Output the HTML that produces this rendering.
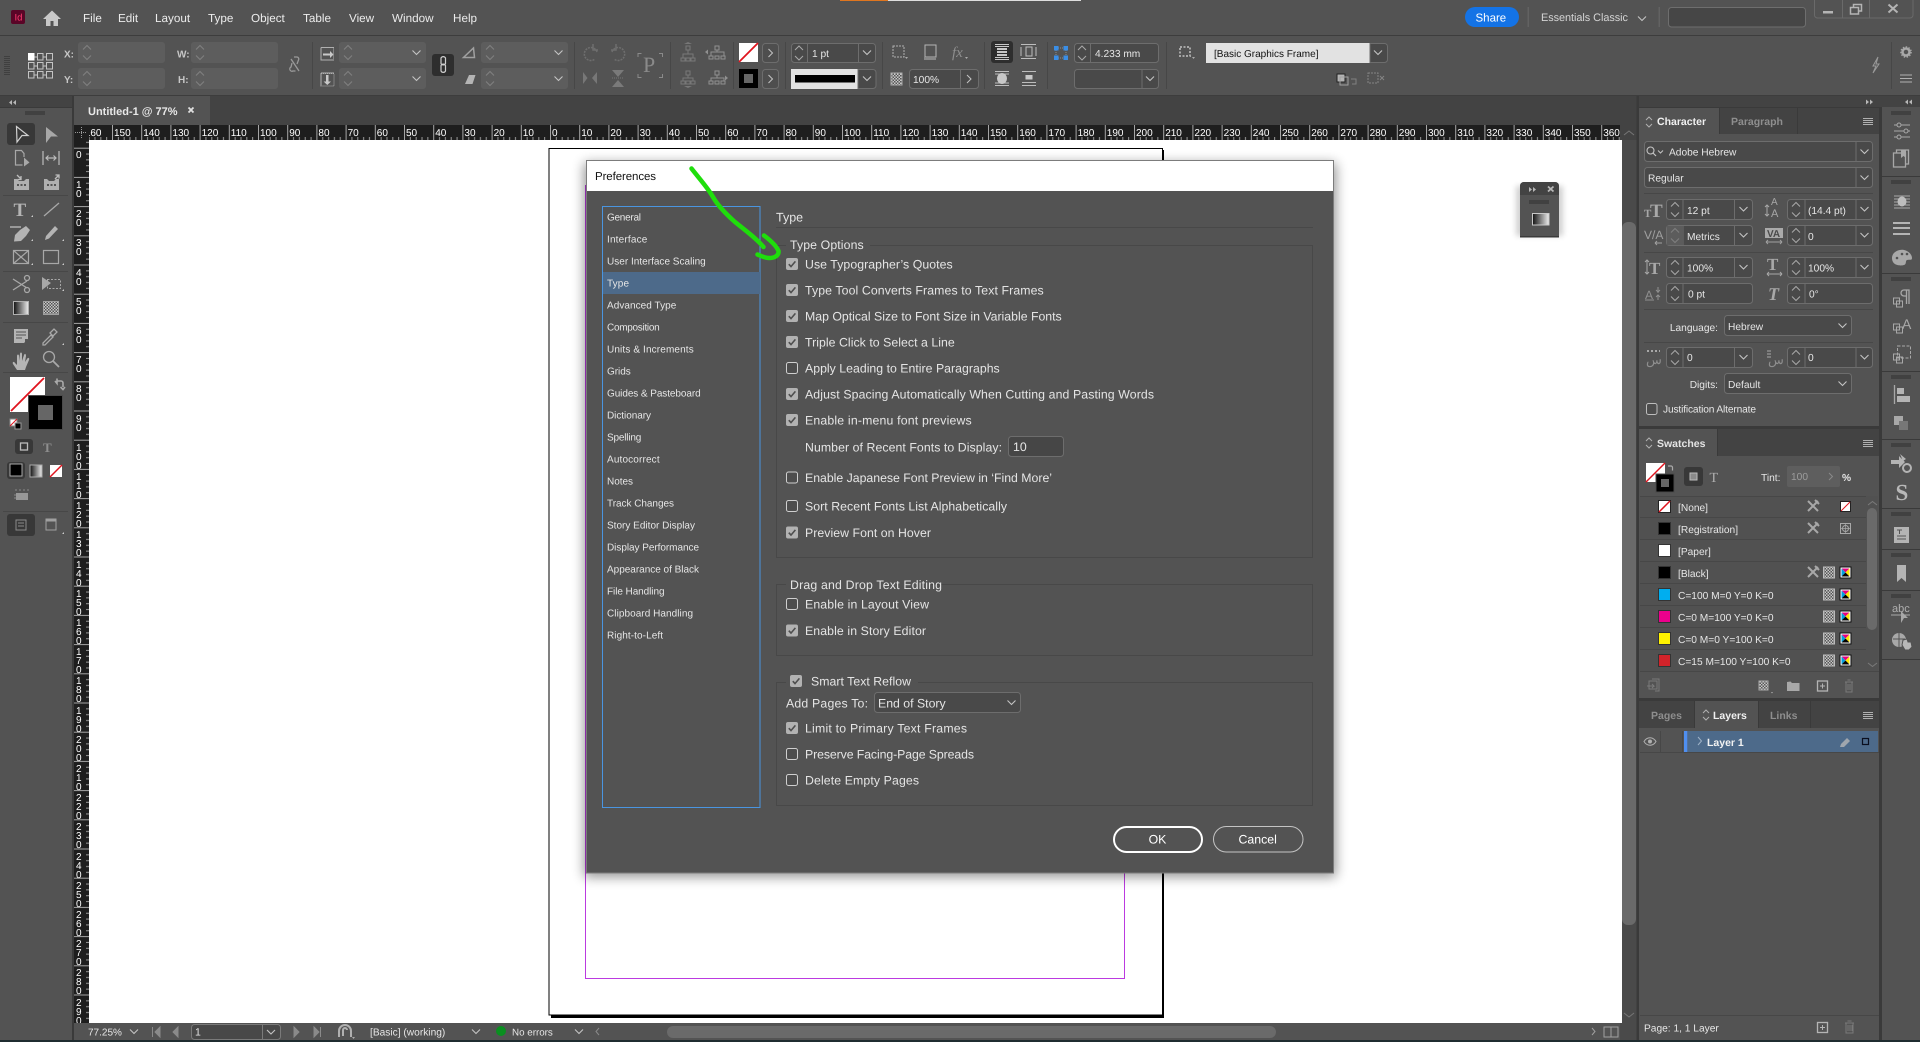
<!DOCTYPE html>
<html lang="en"><head><meta charset="utf-8"><title>InDesign Preferences</title>
<style>
html,body{margin:0;padding:0;background:#535353;width:1920px;height:1042px;overflow:hidden}
svg{position:absolute;left:0;top:0;display:block}
text{font-family:"Liberation Sans",sans-serif;font-size:10.2px;fill:#e6e6e6;text-rendering:geometricPrecision}
.menu text{font-size:11.7px;fill:#ececec}
.dl text{font-size:12.3px;fill:#e4e4e4}
.side text{font-size:10px;fill:#e6e6e6}
.rul text{font-size:10px;fill:#fff}
.b{font-weight:bold}
.i{fill:none;stroke:#a8a8a8;stroke-width:1.2}
.f{fill:#a8a8a8;stroke:none}
.sep{fill:#474747}
.serif{font-family:"Liberation Serif",serif;font-weight:bold;fill:#a8a8a8}
</style></head><body>
<svg xmlns="http://www.w3.org/2000/svg" width="1920" height="1042" viewBox="0 0 1920 1042">
<defs>
<g id="cd"><path d="M-4 -2L0 2L4 -2" fill="none" stroke="#c4c4c4" stroke-width="1.1"/></g>
<g id="sp"><path d="M-4 -3L0 -7L4 -3M-4 3L0 7L4 3" fill="none" stroke="#a8a8a8" stroke-width="1"/></g>
<g id="sd"><path d="M-4 -3L0 -7L4 -3M-4 3L0 7L4 3" fill="none" stroke="#808080" stroke-width="1"/></g>
<g id="ck"><rect x="0" y="-6" width="12" height="12" rx="2" fill="#b2b2b2"/><path d="M2.8 0.2L5 2.6L9.4 -2.6" fill="none" stroke="#4e4e4e" stroke-width="1.6"/></g>
<g id="un"><rect x=".5" y="-5.5" width="11" height="11" rx="2" fill="#4d4d4d" stroke="#cfcfcf"/></g>
<g id="d0"><rect x="0" y="0" width="87" height="21" rx="3" fill="#5d5d5d"/><use href="#sd" x="9" y="10.5"/></g>
<g id="fl"><rect x="1666.5" y=".5" width="86" height="20" rx="3" fill="#494949" stroke="#6d6d6d"/><path d="M1683 1v19M1734.5 1v19" stroke="#6d6d6d"/><use href="#sp" x="1675" y="10.5"/><use href="#cd" x="1743.5" y="10"/></g>
<g id="fr"><rect x="1787.5" y=".5" width="85" height="20" rx="3" fill="#494949" stroke="#6d6d6d"/><path d="M1805 1v19M1856 1v19" stroke="#6d6d6d"/><use href="#sp" x="1796" y="10.5"/><use href="#cd" x="1864.5" y="10"/></g>
<g id="cmyk"><rect x="-5.5" y="-5.5" width="11" height="11" fill="#fff" stroke="#111"/><path d="M-4 -4H4L0 0Z" fill="#e6007e"/><path d="M-4 -4V4L0 0Z" fill="#00a0e0"/><path d="M4 -4V4L0 0Z" fill="#ffe800"/><path d="M-4 4H4L0 0Z" fill="#000"/></g>
<pattern id="chk" patternUnits="userSpaceOnUse" width="3" height="3"><rect width="3" height="3" fill="#c8c8c8"/><rect width="1.5" height="1.5" fill="#555"/><rect x="1.5" y="1.5" width="1.5" height="1.5" fill="#555"/></pattern>
<g id="proc"><rect x="-5.5" y="-5.5" width="11" height="11" fill="url(#chk)" stroke="#bbb"/></g>
<g id="pen"><path d="M-5 -5L5 5M5 -5L-5 5" stroke="#a8a8a8" stroke-width="2"/><path d="M2 -6L6 -2" stroke="#a8a8a8" stroke-width="2"/></g>
<g id="grip"><path d="M0 0v4M2 0v4M4 0v4M6 0v4M8 0v4M10 0v4M12 0v4M14 0v4M16 0v4M18 0v4" stroke="#2f2f2f" stroke-width="1"/></g>
<pattern id="hr" patternUnits="userSpaceOnUse" x="550" y="125" width="29.2" height="15"><rect width="1" height="15" fill="#a6a6a6"/><rect x="5.84" y="12" width="1" height="3" fill="#9a9a9a"/><rect x="11.68" y="12" width="1" height="3" fill="#9a9a9a"/><rect x="17.52" y="12" width="1" height="3" fill="#9a9a9a"/><rect x="23.36" y="12" width="1" height="3" fill="#9a9a9a"/></pattern>
<pattern id="vr" patternUnits="userSpaceOnUse" x="74" y="147.7" width="15" height="29.2"><rect width="15" height="1" fill="#a6a6a6"/><rect x="12" y="5.84" width="3" height="1" fill="#9a9a9a"/><rect x="12" y="11.68" width="3" height="1" fill="#9a9a9a"/><rect x="12" y="17.52" width="3" height="1" fill="#9a9a9a"/><rect x="12" y="23.36" width="3" height="1" fill="#9a9a9a"/></pattern>
<linearGradient id="gr" x1="0" x2="1" y1="0" y2="0"><stop offset="0" stop-color="#111"/><stop offset="1" stop-color="#eee"/></linearGradient>
<filter id="bl" x="-10%" y="-10%" width="120%" height="120%"><feGaussianBlur stdDeviation="6"/></filter>
<filter id="bl2" x="-40%" y="-40%" width="180%" height="180%"><feGaussianBlur stdDeviation="3"/></filter>
<clipPath id="hc"><rect x="89" y="125" width="1531" height="15"/></clipPath>
</defs>

<!-- base -->
<rect width="1920" height="1042" fill="#535353"/>
<rect y="35" width="1920" height="1" fill="#3d3d3d"/>
<rect y="95" width="1920" height="1" fill="#3d3d3d"/>
<rect x="0" y="96" width="1920" height="11" fill="#434343"/>
<rect x="74" y="96" width="1564" height="29" fill="#434343"/>
<rect x="0" y="107" width="72" height="1" fill="#3a3a3a"/>
<rect x="72" y="96" width="2" height="944" fill="#3a3a3a"/>
<rect x="840" y="0" width="48" height="1" fill="#e0761f"/><rect x="888" y="0" width="193" height="1" fill="#dedede"/>

<!-- canvas -->
<rect x="89" y="140" width="1533" height="883" fill="#fff"/>
<rect x="551" y="150" width="613" height="868" fill="#000"/>
<rect x="549" y="148.5" width="613.500" height="866.500" fill="#fff" stroke="#000"/>
<rect x="585.5" y="185.5" width="539" height="793" fill="none" stroke="#bb3ae0" stroke-width="1"/>

<!-- rulers -->
<rect x="74" y="125" width="1546" height="15" fill="#1e1e1e"/>
<rect x="74" y="140" width="15" height="883" fill="#1e1e1e"/>
<rect x="89" y="125" width="1531" height="15" fill="url(#hr)"/>
<rect x="74" y="140" width="15" height="883" fill="url(#vr)"/>
<path d="M75 132.5h12M81.5 127v11" stroke="#999" stroke-dasharray="1 1"/>
<g class="rul" clip-path="url(#hc)">
<text x="84.8" y="136">160</text><text x="114" y="136">150</text><text x="143.2" y="136">140</text><text x="172.4" y="136">130</text><text x="201.6" y="136">120</text><text x="230.8" y="136">110</text><text x="260" y="136">100</text><text x="289.2" y="136">90</text><text x="318.4" y="136">80</text><text x="347.6" y="136">70</text><text x="376.8" y="136">60</text><text x="406" y="136">50</text><text x="435.2" y="136">40</text><text x="464.4" y="136">30</text><text x="493.6" y="136">20</text><text x="522.8" y="136">10</text><text x="552" y="136">0</text><text x="581.2" y="136">10</text><text x="610.4" y="136">20</text><text x="639.6" y="136">30</text><text x="668.8" y="136">40</text><text x="698" y="136">50</text><text x="727.2" y="136">60</text><text x="756.4" y="136">70</text><text x="785.6" y="136">80</text><text x="814.8" y="136">90</text><text x="844" y="136">100</text><text x="873.2" y="136">110</text><text x="902.4" y="136">120</text><text x="931.6" y="136">130</text><text x="960.8" y="136">140</text><text x="990" y="136">150</text><text x="1019.2" y="136">160</text><text x="1048.4" y="136">170</text><text x="1077.6" y="136">180</text><text x="1106.8" y="136">190</text><text x="1136" y="136">200</text><text x="1165.2" y="136">210</text><text x="1194.4" y="136">220</text><text x="1223.6" y="136">230</text><text x="1252.8" y="136">240</text><text x="1282" y="136">250</text><text x="1311.2" y="136">260</text><text x="1340.4" y="136">270</text><text x="1369.6" y="136">280</text><text x="1398.8" y="136">290</text><text x="1428" y="136">300</text><text x="1457.2" y="136">310</text><text x="1486.4" y="136">320</text><text x="1515.6" y="136">330</text><text x="1544.8" y="136">340</text><text x="1574" y="136">350</text><text x="1603.2" y="136">360</text>
</g>
<g class="rul">
<text x="76" y="158">0</text>
<text x="76 76" y="188 197">10</text><text x="76 76" y="217 226">20</text><text x="76 76" y="246 255">30</text><text x="76 76" y="276 285">40</text><text x="76 76" y="305 314">50</text><text x="76 76" y="334 343">60</text><text x="76 76" y="363 372">70</text><text x="76 76" y="392 401">80</text><text x="76 76" y="422 431">90</text>
<text x="76 76 76" y="451 460 469">100</text><text x="76 76 76" y="480 489 498">110</text><text x="76 76 76" y="509 518 527">120</text><text x="76 76 76" y="538 547 556">130</text><text x="76 76 76" y="568 577 586">140</text><text x="76 76 76" y="597 606 615">150</text><text x="76 76 76" y="626 635 644">160</text><text x="76 76 76" y="655 664 673">170</text><text x="76 76 76" y="684 693 702">180</text><text x="76 76 76" y="714 723 732">190</text><text x="76 76 76" y="743 752 761">200</text><text x="76 76 76" y="772 781 790">210</text><text x="76 76 76" y="801 810 819">220</text><text x="76 76 76" y="830 839 848">230</text><text x="76 76 76" y="860 869 878">240</text><text x="76 76 76" y="889 898 907">250</text><text x="76 76 76" y="918 927 936">260</text><text x="76 76 76" y="947 956 965">270</text><text x="76 76 76" y="976 985 994">280</text><text x="76 76 76" y="1006 1015 1024">290</text>
</g>
<rect x="74" y="1023" width="1564" height="17" fill="#535353"/>

<!-- tab -->
<rect x="74" y="96" width="136" height="29" fill="#535353"/>
<text x="88" y="115" class="b" style="font-size:11px;fill:#e8e8e8">Untitled-1 @ 77%</text>
<path d="M188.5 107.5l5 5M193.5 107.5l-5 5" stroke="#e0e0e0" stroke-width="1.8"/>
<path d="M12 100l-3 2.5 3 2.5zM16 100l-3 2.5 3 2.5z" fill="#b8b8b8"/>

<!-- menu -->
<rect x="11" y="10" width="14" height="14" rx="2" fill="#5a0527"/>
<text x="14.5" y="20.5" style="font-size:9.5px;fill:#ff3a70">Id</text>
<path d="M52 10.5L43 19h3v7h4.500v-5h3v5H58v-7h3z" fill="#c8c8c8"/>
<g class="menu"><text x="83" y="22">File</text><text x="118" y="22">Edit</text><text x="155" y="22">Layout</text><text x="208" y="22">Type</text><text x="251" y="22">Object</text><text x="303" y="22">Table</text><text x="349" y="22">View</text><text x="392" y="22">Window</text><text x="453" y="22">Help</text></g>
<rect x="1465" y="7" width="54" height="20" rx="10" fill="#1473e6"/>
<text x="1475.5" y="21.5" style="font-size:11.5px;fill:#fff">Share</text>
<rect x="1527.5" y="7" width="1.5" height="20" fill="#626262"/>
<text x="1541" y="21" textLength="87" style="font-size:10.9px;fill:#d4d4d4">Essentials Classic</text>
<use href="#cd" x="1642" y="18.5"/>
<rect x="1658.5" y="7" width="1.5" height="20" fill="#626262"/>
<rect x="1668.5" y="7.5" width="137" height="19.5" rx="3" fill="#464646" stroke="#6e6e6e"/>
<path d="M1814.5 0v15a3 3 0 0 0 3 3h92.500a3 3 0 0 0 3-3V0M1842.5 0v18M1869.5 0v18" fill="none" stroke="#6a6a6a"/>
<rect x="1823" y="11" width="10" height="2.5" fill="#b4b4b4"/>
<path d="M1850.5 7.5h8v6.500h-8zM1853.5 7.5v-3h8v6.500h-3" fill="none" stroke="#b4b4b4" stroke-width="1.5"/>
<path d="M1888.5 4.5l9 8M1897.5 4.5l-9 8" stroke="#b4b4b4" stroke-width="2"/>

<!-- control bar -->
<g fill="#3f3f3f"><path d="M4 56h6v1H4zM4 58h6v1H4zM4 60h6v1H4zM4 62h6v1H4zM4 64h6v1H4zM4 66h6v1H4zM4 68h6v1H4zM4 70h6v1H4zM4 72h6v1H4zM4 74h6v1H4z"/></g>
<g fill="none" stroke="#c4c4c4"><rect x="37.5" y="53.5" width="5.5" height="6.5"/><rect x="46.5" y="53.5" width="6" height="6.5"/><rect x="28.5" y="62.5" width="5.5" height="6.5"/><rect x="37.5" y="62.5" width="5.5" height="6.5"/><rect x="46.5" y="62.5" width="6" height="6.5"/><rect x="28.5" y="71.5" width="5.5" height="6.5"/><rect x="37.5" y="71.5" width="5.5" height="6.5"/><rect x="46.5" y="71.5" width="6" height="6.5"/><path d="M34 57h3.500M43 57h3.500M34 66h3.500M43 66h3.500M34 75h3.500M43 75h3.500"/></g>
<rect x="28" y="53" width="6.5" height="7.5" fill="#fff"/>
<text x="64" y="57.5" class="b" style="font-size:10px;fill:#c8c8c8">X:</text><text x="64" y="83" class="b" style="font-size:10px;fill:#c8c8c8">Y:</text>
<text x="177" y="57.5" class="b" style="font-size:10px;fill:#c8c8c8">W:</text><text x="178" y="83" class="b" style="font-size:10px;fill:#c8c8c8">H:</text>
<use href="#d0" x="78" y="42"/><use href="#d0" x="78" y="68"/><use href="#d0" x="191" y="42"/><use href="#d0" x="191" y="68"/>
<use href="#d0" x="339" y="42"/><use href="#d0" x="339" y="68"/><use href="#d0" x="481" y="42"/><use href="#d0" x="481" y="68"/>
<use href="#cd" x="416.5" y="52.5"/><use href="#cd" x="416.5" y="78.5"/><use href="#cd" x="558.5" y="52.5"/><use href="#cd" x="558.5" y="78.5"/>
<path d="M291 59l8 12M294 57h2.500a2 2 0 0 1 2 3l-1.500 4M292 63l-1 4a2 2 0 0 0 2 4h2.500" fill="none" stroke="#9a9a9a" stroke-width="1.3"/>
<rect x="312" y="42" width="1" height="47" class="sep"/>
<path d="M321 47.5h13M321 47.5v12.500h13" fill="none" stroke="#b0b0b0"/><path d="M323 53.5h7v-2.500l3.500 3.500-3.500 3.500v-2.500h-7z" fill="#c8c8c8"/><path d="M333.5 47.5v12.500" stroke="#b0b0b0" stroke-dasharray="1 1"/>
<path d="M321 73.5v12.500h13v-12.500z" fill="none" stroke="#b0b0b0" stroke-dasharray="1 1"/><path d="M321 73v13M321 73h13" stroke="#b0b0b0"/><path d="M326 75h2.500v6.500h2.500l-3.700 3.500-3.700-3.500h2.400z" fill="#c8c8c8"/>
<rect x="432" y="54" width="22" height="22" rx="3" fill="#2e2e2e"/>
<path d="M441 58.5a2.500 2.500 0 0 1 4.500 0v5.500a2.500 2.500 0 0 1-4.500 0zM441 66a2.500 2.500 0 0 1 4.500 0v5.500a2.500 2.500 0 0 1-4.500 0z" fill="none" stroke="#cfcfcf" stroke-width="1.2" transform="translate(0,-.5)"/>
<path d="M463.5 57.5h11l-1-9.500z" fill="none" stroke="#a0a0a0" stroke-width="1.5"/>
<path d="M465 84l4-9h6.500l-3 9z" fill="#b4b4b4"/>
<rect x="574" y="42" width="1" height="47" class="sep"/>
<g fill="none" stroke="#6e6e6e" stroke-width="1.5"><path d="M597 52a6.500 6.500 0 1 0-2 7" stroke-dasharray="2 1"/><path d="M612 52a6.500 6.500 0 1 1 2 7" stroke-dasharray="2 1"/></g>
<path d="M593 44v6h5M616 44v6h-5" stroke="#6e6e6e" fill="none" stroke-width="1.5"/>
<path d="M583 72v12l4.500-6zM597 72v12l-5-6z" fill="#777"/><path d="M612 70h12l-6 7zM612 87h12l-6-7z" fill="#7a7a7a"/><path d="M612 78h12" stroke="#777" stroke-dasharray="1 1"/>
<path d="M638 57v-3.500h3.500M659 53.5h3.500v3.500M638 74v3.500h3.500M659 77.5h3.500V74" fill="none" stroke="#8a8a8a" stroke-width="1"/>
<text x="643" y="72" class="serif" style="font-size:22px;font-weight:normal;fill:#8a8a8a">P</text>
<rect x="670" y="42" width="1" height="47" class="sep"/>
<g fill="none" stroke="#787878"><rect x="686" y="46" width="4" height="4"/><path d="M688 50v4M683 58v-4h10v4"/><rect x="681" y="58" width="4" height="3"/><rect x="686" y="58" width="4" height="3"/><rect x="691" y="58" width="4" height="3"/>
<rect x="686" y="71" width="4" height="4"/><path d="M688 75v3M683 81v-3h10v3"/><rect x="681" y="81" width="4" height="3"/><rect x="686" y="81" width="4" height="3"/><rect x="691" y="81" width="4" height="3"/></g>
<path d="M684 44l4-2 4 2zM684 86l4 2 4-2z" fill="#787878"/>
<g fill="none" stroke="#909090"><rect x="715" y="46" width="4" height="4"/><path d="M717 50v2M711 56v-4h13v4"/><rect x="709" y="56" width="4" height="3"/><rect x="715" y="56" width="4" height="3"/><rect x="721" y="56" width="4" height="3"/><rect x="715" y="71" width="4" height="4"/><path d="M717 75v3M711 81v-3h13v3"/><rect x="709" y="81" width="4" height="3"/><rect x="715" y="81" width="4" height="3"/><rect x="721" y="81" width="4" height="3"/></g>
<path d="M705 52l3-2.500v5zM728 78l-3-2.500v5z" fill="#909090"/>
<rect x="733" y="42" width="1" height="47" class="sep"/>
<rect x="739" y="43" width="19" height="19" fill="#fff"/><path d="M739 62L758 43" stroke="#e0141e" stroke-width="1.8"/>
<rect x="762.5" y="43.5" width="16" height="19" rx="3" fill="#4e4e4e" stroke="#6d6d6d"/><path d="M768.5 49l4 4-4 4" fill="none" stroke="#c4c4c4"/>
<rect x="739" y="69" width="19" height="19" fill="#000"/><rect x="744" y="74" width="9" height="9" fill="#666"/>
<rect x="762.5" y="69.5" width="16" height="19" rx="3" fill="#4e4e4e" stroke="#6d6d6d"/><path d="M768.5 75l4 4-4 4" fill="none" stroke="#c4c4c4"/>
<rect x="785" y="42" width="1" height="47" class="sep"/>
<rect x="791.5" y="43.5" width="84" height="19" rx="3" fill="#494949" stroke="#6d6d6d"/><path d="M807.5 44v18M858.5 44v18" stroke="#6d6d6d"/><use href="#sp" x="799" y="53"/><use href="#cd" x="867" y="52.5"/>
<text x="812" y="57">1 pt</text>
<rect x="791" y="69" width="67" height="20" fill="#e2e2e2"/><rect x="795" y="75" width="60" height="7.5" fill="#000"/>
<path d="M858 69.5h15a3 3 0 0 1 3 3v13a3 3 0 0 1-3 3h-15z" fill="#494949" stroke="#6d6d6d"/><use href="#cd" x="867" y="78.5"/>
<rect x="882" y="42" width="1" height="47" class="sep"/>
<path d="M893 46h11v11h-11z" fill="none" stroke="#b0b0b0" stroke-dasharray="2 1"/><rect x="925" y="45" width="11" height="12" fill="none" stroke="#b4b4b4"/><rect x="924" y="57" width="12" height="3" fill="#888"/>
<text x="952" y="57" style="font-family:'Liberation Serif',serif;font-style:italic;font-size:15px;fill:#8e8e8e">fx</text><path d="M965 57l1.5 2 1.5-2zM905 57l1.5 2 1.5-2z" fill="#aaa"/>
<rect x="891" y="73" width="11" height="12" fill="url(#chk)" stroke="#aaa"/>
<rect x="909.5" y="69.5" width="69" height="19" rx="3" fill="#494949" stroke="#6d6d6d"/><path d="M960.5 70v18" stroke="#6d6d6d"/><path d="M967 75l4 4-4 4" fill="none" stroke="#c4c4c4"/>
<text x="913" y="83">100%</text>
<rect x="984" y="42" width="1" height="47" class="sep"/>
<rect x="991" y="41" width="22" height="22" rx="3" fill="#2e2e2e"/>
<path d="M995 46.5h14M995 57.5h14M995 59.5h14M995 44.5h14" stroke="#c8c8c8"/><path d="M997 48h10v2h-10zM997 51h10v2h-10zM997 54h10v2h-10z" fill="#c8c8c8"/>
<g stroke="#bdbdbd" fill="none"><path d="M1021 44.5h15M1021 58.5h15M1021 47v9M1036 47v9"/><rect x="1026" y="47" width="6" height="9"/><path d="M995 71.5h14M995 74h14M995 83h14M995 85.5h14M1022 71.5h14M1022 85.5h14M1022 82.5h14"/></g><ellipse cx="1002" cy="78.5" rx="5" ry="5.5" fill="#c8c8c8"/><rect x="1025.5" y="75" width="7" height="4.5" fill="#c8c8c8"/>
<rect x="1047" y="42" width="1" height="47" class="sep"/>
<path d="M1058 48h6M1058 58h6M1056 50v6M1066 50v6" stroke="#8c8c8c" stroke-dasharray="1 1"/>
<g fill="#3a8ee6"><rect x="1054" y="46" width="4.5" height="4.5"/><rect x="1063.5" y="46" width="4.5" height="4.5"/><rect x="1054" y="55.5" width="4.5" height="4.5"/><rect x="1063.5" y="55.5" width="4.5" height="4.5"/></g>
<rect x="1074.5" y="43.5" width="84" height="19" rx="3" fill="#494949" stroke="#6d6d6d"/><path d="M1090.5 44v18" stroke="#6d6d6d"/><use href="#sp" x="1082" y="53"/>
<text x="1095" y="57">4.233 mm</text>
<rect x="1074.5" y="69.5" width="84" height="19" rx="3" fill="#494949" stroke="#6d6d6d"/><path d="M1142 70v18" stroke="#6d6d6d"/><use href="#cd" x="1150" y="78.5"/>
<rect x="1166" y="42" width="1" height="47" class="sep"/>
<rect x="1180" y="47" width="10" height="9" fill="none" stroke="#a6a6a6" stroke-width="2" stroke-dasharray="2 1.500"/><path d="M1192 57l1.5 2 1.500-2z" fill="#aaa"/>
<rect x="1206" y="43" width="164" height="20" fill="#e2e2e2"/>
<text x="1214" y="57" style="font-size:10px;fill:#111">[Basic Graphics Frame]</text>
<path d="M1370 43.5h14.500a3 3 0 0 1 3 3v13a3 3 0 0 1-3 3h-14.500z" fill="#494949" stroke="#6d6d6d"/><use href="#cd" x="1378" y="52.5"/>
<rect x="1337" y="74" width="8" height="8" fill="#b4b4b4" stroke="#222"/><rect x="1340" y="77" width="8" height="8" fill="none" stroke="#a0a0a0"/><path d="M1351 79h5v5h-4" fill="none" stroke="#808080"/>
<rect x="1368" y="73" width="10" height="10" fill="none" stroke="#848484" stroke-dasharray="2 1"/><path d="M1380 76l4 4M1384 76l-4 4" stroke="#848484"/>
<path d="M1878 57l-5 9h3l-3 7 6-9h-3l2-7z" fill="none" stroke="#9a9a9a" stroke-width="1"/>
<rect x="1891" y="42" width="1" height="47" class="sep"/>
<circle cx="1906" cy="52" r="3.5" fill="none" stroke="#a8a8a8" stroke-width="2.5"/><circle cx="1906" cy="52" r="5.2" fill="none" stroke="#a8a8a8" stroke-width="1.2" stroke-dasharray="1.500 1.500"/>
<path d="M1900 75h12M1900 78.5h12M1900 82h12" stroke="#b0b0b0"/>
<path d="M1866 99.5l3 2.500-3 2.500zM1870 99.5l3 2.500-3 2.500zM1908 99.5l-3 2.500 3 2.500zM1912 99.5l-3 2.500 3 2.500z" fill="#b8b8b8"/>

<!-- tools -->
<use href="#grip" x="26" y="111"/>
<rect x="7" y="123" width="28" height="22" rx="3" fill="#383838"/>
<path d="M16.5 126.5L28 135.5L22 135.5L17 142Z" fill="none" stroke="#d0d0d0" stroke-width="1.2"/>
<path d="M46 127L58 136.5L51 136.5L46 143Z" fill="#a8a8a8"/>
<path d="M24 157v-3.500L21.500 150.5H15.5V165h7" fill="none" stroke="#a8a8a8" stroke-width="1.2"/><path d="M24 157.5l5.500 5-5.500 4z" fill="#a8a8a8"/>
<path d="M43 151v14M59 151v14" stroke="#a8a8a8" stroke-width="1.5"/><path d="M46 158h10M48.5 155.5L46 158l2.500 2.500M53.5 155.5L56 158l-2.500 2.500" fill="none" stroke="#bcbcbc" stroke-width="1.2"/>
<path d="M14 179h3l2 2h5l2-2h3v11H14z" fill="#b0b0b0"/><path d="M17 184h2v2h-2zM20.5 184h2v2h-2zM24 184h2v2h-2z" fill="#555"/><path d="M17 175l4 4M21 176v3.500h-3.500" fill="none" stroke="#bdbdbd" stroke-width="1.3"/>
<path d="M44 179h3l2 2h5l2-2h3v11H44z" fill="#b0b0b0"/><path d="M47 184h2v2h-2zM50.5 184h2v2h-2zM54 184h2v2h-2z" fill="#555"/><path d="M55 179l4-4M55.5 175h3.500v3.500" fill="none" stroke="#bdbdbd" stroke-width="1.3"/>
<rect x="3" y="195" width="65" height="1" fill="#474747"/>
<text x="13.5" y="216" class="serif" style="font-size:19px;fill:#b4b4b4">T</text><path d="M31 217l2 0 0-2z" fill="#ccc"/>
<path d="M44 216L59 203" stroke="#a8a8a8" stroke-width="1.3"/>
<path d="M10 227h11" stroke="#b0b0b0" stroke-width="1.5"/><path d="M15 235l5-5 6-4 4 4-4 6-5 5-7 0.500z" fill="#b4b4b4"/><path d="M31 241l2 0 0-2z" fill="#ccc"/>
<path d="M45 240l1-4 9-10 3 3-9 9.500z" fill="#b4b4b4"/><path d="M62 241l2 0 0-2z" fill="#ccc"/>
<rect x="13.5" y="250.5" width="15" height="13" fill="none" stroke="#a8a8a8" stroke-width="1.2"/><path d="M13.5 250.5l15 13M28.5 250.5l-15 13" stroke="#a8a8a8" stroke-width="1.2"/><path d="M31 265l2 0 0-2z" fill="#ccc"/>
<rect x="43.5" y="250.5" width="15" height="13" fill="none" stroke="#a8a8a8" stroke-width="1.2"/><path d="M62 265l2 0 0-2z" fill="#ccc"/>
<rect x="3" y="271" width="65" height="1" fill="#474747"/>
<g fill="none" stroke="#a8a8a8" stroke-width="1.3"><path d="M13 279l14 9M13 290l14-9"/><circle cx="27" cy="278" r="2.5"/><circle cx="27" cy="290" r="2.5"/></g>
<path d="M42 277l9 6-9 7z" fill="#a8a8a8"/><rect x="47.5" y="279.5" width="13" height="9" fill="none" stroke="#a8a8a8" stroke-dasharray="2 1.500"/><path d="M62 291l2 0 0-2z" fill="#ccc"/>
<rect x="13.5" y="301.5" width="15" height="13" fill="url(#gr)" stroke="#b0b0b0"/>
<rect x="43.5" y="301.5" width="15" height="13" fill="url(#chk)" stroke="#a0a0a0"/>
<rect x="3" y="322" width="65" height="1" fill="#474747"/>
<path d="M14 329h14v10l-4 4H14z" fill="#b4b4b4"/><path d="M16 332h10M16 335h10M16 338h6" stroke="#555"/><path d="M25 343l3-4h-3z" fill="#555"/>
<path d="M45 345l-2 0 0-2 8-8 2 2zM50 333l4-4 3 3-4 4z" fill="none" stroke="#a8a8a8" stroke-width="1.3"/><path d="M62 345l2 0 0-2z" fill="#ccc"/>
<path d="M17 370l-4-6c-1-2 1-3 2-1l2 2v-9c0-2 2-2 2 0v5l1-7c0-2 2-2 2 0v7l2-6c1-2 2-1 2 1l-1 6 2-3c1-2 3-1 2 1l-3 7-1 3z" fill="#b4b4b4"/>
<circle cx="49" cy="357" r="5.5" fill="none" stroke="#a8a8a8" stroke-width="1.3"/><path d="M53 361l6 6" stroke="#a8a8a8" stroke-width="1.8"/>
<rect x="3" y="372" width="65" height="1" fill="#474747"/>
<rect x="10" y="377" width="35" height="35" fill="#fff"/><path d="M11 411L44 378" stroke="#e0141e" stroke-width="1.8"/>
<rect x="28.5" y="395.5" width="34" height="34" fill="#000" stroke="#4a4a4a"/><rect x="38" y="405" width="15" height="15" fill="#666"/>
<path d="M57 381h4a2 2 0 0 1 2 2v4M57 378.5v5l-2-2.500M60.500 387l2.500 2.500 2-2.500" fill="none" stroke="#aaaaaa" stroke-width="1.6"/>
<rect x="10" y="419" width="7" height="7" fill="#fff" stroke="#888"/><path d="M10 426l7-7" stroke="#e0141e"/><rect x="15" y="423" width="6" height="6" fill="#000" stroke="#999"/>
<rect x="15" y="439" width="18" height="15" rx="3" fill="#383838"/><rect x="20.5" y="443" width="7" height="7" fill="none" stroke="#bcbcbc" stroke-width="1.3"/>
<text x="43" y="452" class="serif" style="font-size:13px;fill:#8e8e8e">T</text>
<rect x="7" y="462" width="18" height="17" rx="3" fill="#383838"/><rect x="10" y="464" width="12" height="12" fill="#000" stroke="#aaa"/>
<rect x="30" y="465" width="12" height="12" fill="url(#gr)" stroke="#aaa"/>
<rect x="50" y="465" width="12" height="12" fill="#fff"/><path d="M50 477L62 465" stroke="#e0141e" stroke-width="1.5"/>
<rect x="16" y="493" width="12" height="7" fill="#989898"/><path d="M16 491v-2M20 491v-2M24 491v-2M28 491v-2M14 495h2M14 498h2" stroke="#8a8a8a"/>
<rect x="3" y="511" width="65" height="1" fill="#474747"/>
<rect x="7" y="514" width="28" height="22" rx="3" fill="#383838"/><rect x="16" y="520" width="10" height="10" fill="none" stroke="#8a8a8a"/><path d="M18 523h6M18 526h6" stroke="#8a8a8a"/>
<rect x="46" y="519" width="10" height="11" fill="none" stroke="#a0a0a0"/><rect x="46" y="519" width="10" height="2.5" fill="#a0a0a0"/><path d="M62 534l2 0 0-2z" fill="#ccc"/>

<!-- scrollbars -->
<rect x="1622" y="125" width="15" height="898" fill="#4a4a4a"/>
<rect x="1620" y="125" width="17" height="15" fill="#434343"/>
<path d="M1624 135l5-4 5 4" fill="none" stroke="#767676"/>
<rect x="1622" y="222" width="14" height="703" rx="6" fill="#6a6a6a"/>
<path d="M1624 1013l5 4 5-4" fill="none" stroke="#767676"/>
<rect x="667" y="1026" width="609" height="12" rx="6" fill="#6a6a6a"/>
<rect x="1620" y="1023" width="18" height="17" fill="#4a4a4a"/>
<rect x="1604" y="1027" width="14" height="10" fill="none" stroke="#a0a0a0"/><path d="M1611 1027v10" stroke="#a0a0a0"/>
<path d="M1592 1028l3 3.500-3 3.500" fill="none" stroke="#a0a0a0"/>

<!-- status bar -->
<text x="88" y="1035.5" style="font-size:10px">77.25%</text><use href="#cd" x="134" y="1031.5"/>
<path d="M152.5 1027v10M160 1027l-5 5 5 5zM178 1027l-5 5 5 5z" fill="#8a8a8a" stroke="#8a8a8a"/>
<rect x="191.5" y="1024.5" width="89" height="15" rx="3" fill="#484848" stroke="#7a7a7a"/><path d="M262.5 1025v14" stroke="#7a7a7a"/>
<text x="195" y="1035.5" style="font-size:10.5px">1</text><use href="#cd" x="271" y="1032"/>
<path d="M294 1027l5 5-5 5zM314 1027l5 5-5 5zM320.5 1027v10" fill="#8a8a8a" stroke="#8a8a8a"/>
<path d="M339 1037v-6a6 6 0 0 1 12 0v6M343 1036v-6a2 2 0 0 1 4 0" fill="none" stroke="#b0b0b0" stroke-width="2"/><path d="M352 1037l1.5 2 1.500-2z" fill="#aaa"/>
<text x="370" y="1035.5">[Basic] (working)</text><use href="#cd" x="476" y="1031.5"/>
<circle cx="501" cy="1031" r="5" fill="#0a8f20"/>
<text x="512" y="1035.5" style="font-size:9.800px">No errors</text><use href="#cd" x="579" y="1031.5"/>
<path d="M599 1028l-3 3.500 3 3.500" fill="none" stroke="#8a8a8a"/>
<rect y="1040" width="1920" height="2" fill="#1f2c30"/>

<!-- right panel frame -->
<rect x="1636.5" y="96" width="2.5" height="944" fill="#3a3a3a"/>
<rect x="1879" y="107" width="3" height="933" fill="#3a3a3a"/>
<rect x="1639" y="107" width="240" height="1" fill="#3a3a3a"/>
<!-- Character -->
<rect x="1639" y="108" width="240" height="26" fill="#434343"/>
<rect x="1639" y="108" width="80" height="27" fill="#535353"/>
<path d="M1719.5 108v26M1797.5 108v26" stroke="#3a3a3a"/>
<path d="M1646 120l3-3 3 3M1646 124l3 3 3-3" fill="none" stroke="#b0b0b0"/>
<text x="1657" y="125" class="b" style="font-size:10.5px;fill:#f0f0f0">Character</text>
<text x="1731" y="125" class="b" style="font-size:10.5px;fill:#8e8e8e">Paragraph</text>
<path d="M1863 118.5h10M1863 120.5h10M1863 122.5h10M1863 124.5h10" stroke="#b0b0b0" stroke-width=".9"/>
<rect x="1644.5" y="141.5" width="228" height="20" rx="3" fill="#494949" stroke="#6d6d6d"/><path d="M1856 142v19" stroke="#6d6d6d"/><use href="#cd" x="1864.5" y="151.5"/>
<circle cx="1650.5" cy="150.5" r="3.5" fill="none" stroke="#c4c4c4" stroke-width="1.1"/><path d="M1653 153l3 3" stroke="#c4c4c4" stroke-width="1.2"/><path d="M1658 150.5l2.500 2.500 2.500-2.500" fill="none" stroke="#c4c4c4"/>
<text x="1669" y="155.5">Adobe Hebrew</text>
<rect x="1644.5" y="167.5" width="228" height="20" rx="3" fill="#494949" stroke="#6d6d6d"/><path d="M1856 168v19" stroke="#6d6d6d"/><use href="#cd" x="1864.5" y="177.5"/>
<text x="1648" y="181.5">Regular</text>
<rect x="1644" y="193" width="229" height="1" fill="#474747"/>
<use href="#fl" y="199"/><use href="#fr" y="199"/>
<text x="1687" y="214">12 pt</text><text x="1808" y="214">(14.4 pt)</text>
<text x="1644" y="217" class="serif" style="font-size:11px">T</text><text x="1650" y="217" class="serif" style="font-size:19px">T</text>
<text x="1771" y="205" style="font-size:10px;fill:#a8a8a8">A</text><text x="1771" y="217" style="font-size:11px;fill:#a8a8a8">A</text><path d="M1767 205v11M1765 207l2-2 2 2M1765 214l2 2 2-2" fill="none" stroke="#a8a8a8"/>
<use href="#fl" y="225"/><use href="#fr" y="225"/>
<rect x="1667" y="226" width="16" height="19" fill="#5c5c5c"/><use href="#sd" x="1675" y="235.5"/>
<text x="1687" y="240">Metrics</text><text x="1808" y="240">0</text>
<text x="1644" y="239" style="font-size:12px;fill:#a0a0a0">V/A</text><path d="M1655 243h7M1655 243l2-2M1655 243l2 2" fill="none" stroke="#a0a0a0"/>
<rect x="1765" y="228" width="18" height="10" fill="#aaa"/><text x="1767" y="237" class="b" style="font-size:10px;fill:#4a4a4a">VA</text><path d="M1766 242h16M1766 242l2-2M1766 242l2 2M1782 242l-2-2M1782 242l-2 2" fill="none" stroke="#a0a0a0"/>
<rect x="1644" y="252" width="229" height="1" fill="#474747"/>
<use href="#fl" y="257"/><use href="#fr" y="257"/>
<text x="1687" y="271.5">100%</text><text x="1808" y="271.5">100%</text>
<path d="M1647 260v14M1645 262l2-2 2 2M1645 272l2 2 2-2" fill="none" stroke="#a8a8a8"/><text x="1649" y="274" class="serif" style="font-size:17px">T</text>
<text x="1767" y="270" class="serif" style="font-size:17px">T</text><path d="M1767 274h15M1767 274l2-2M1767 274l2 2M1782 274l-2-2M1782 274l-2 2" fill="none" stroke="#a8a8a8"/>
<g><rect x="1666.5" y="283.5" width="86" height="20" rx="3" fill="#494949" stroke="#6d6d6d"/><path d="M1683 284v19" stroke="#6d6d6d"/><use href="#sp" x="1675" y="293.5"/>
<rect x="1787.5" y="283.5" width="85" height="20" rx="3" fill="#494949" stroke="#6d6d6d"/><path d="M1805 284v19" stroke="#6d6d6d"/><use href="#sp" x="1796" y="293.5"/></g>
<text x="1688" y="297.5">0 pt</text><text x="1809" y="297.5">0°</text>
<text x="1645" y="299" style="font-size:12px;fill:#909090">A</text><path d="M1645 300h9M1658 287v6M1656 290l2 2 2-2M1658 300v-5M1656 297l2-2 2 2" fill="none" stroke="#909090"/>
<text x="1768" y="300" class="serif" style="font-size:18px;font-style:italic">T</text>
<rect x="1644" y="309" width="229" height="1" fill="#474747"/>
<text x="1718" y="331" text-anchor="end">Language:</text>
<rect x="1724.5" y="315.5" width="127" height="20" rx="3" fill="#494949" stroke="#6d6d6d"/><use href="#cd" x="1842.5" y="325.5"/>
<text x="1728" y="330">Hebrew</text>
<rect x="1644" y="342" width="229" height="1" fill="#474747"/>
<use href="#fl" y="347"/><use href="#fr" y="347"/>
<text x="1687" y="361">0</text><text x="1808" y="361">0</text>
<text x="1646" y="364" style="font-size:13px;fill:#8e8e8e;font-family:'Noto Sans CJK SC','Liberation Sans',sans-serif">س</text><path d="M1647 351h2M1651 351h2M1655 351h2M1659 351h1" stroke="#a8a8a8" stroke-width="2"/>
<text x="1768" y="364" style="font-size:13px;fill:#8e8e8e;font-family:'Noto Sans CJK SC','Liberation Sans',sans-serif">س</text><path d="M1767 351h4M1767 354h4M1767 357h4" stroke="#a8a8a8"/>
<text x="1718" y="388" text-anchor="end">Digits:</text>
<rect x="1724.5" y="373.5" width="127" height="20" rx="3" fill="#494949" stroke="#6d6d6d"/><use href="#cd" x="1842.5" y="383.5"/>
<text x="1728" y="388">Default</text>
<rect x="1646.5" y="403.5" width="10.5" height="11" rx="2" fill="#4d4d4d" stroke="#bdbdbd"/>
<text x="1663" y="412.5" textLength="93">Justification Alternate</text>
<rect x="1639" y="426" width="240" height="3" fill="#3a3a3a"/>

<!-- Swatches -->
<rect x="1639" y="429" width="240" height="27" fill="#434343"/>
<rect x="1639" y="429" width="78" height="28" fill="#535353"/><path d="M1717.5 429v27" stroke="#3a3a3a"/>
<path d="M1646 441l3-3 3 3M1646 445l3 3 3-3" fill="none" stroke="#b0b0b0"/>
<text x="1657" y="447" class="b" style="font-size:10.5px;fill:#e4e4e4">Swatches</text>
<path d="M1863 440.5h10M1863 442.5h10M1863 444.5h10M1863 446.5h10" stroke="#b0b0b0" stroke-width=".9"/>
<rect x="1646" y="463" width="19" height="19" fill="#fff"/><path d="M1646 482L1665 463" stroke="#e0141e" stroke-width="1.5"/>
<rect x="1656" y="474" width="18" height="18" fill="#000" stroke="#494949"/><rect x="1661" y="479" width="8" height="8" fill="#666"/>
<path d="M1668 466h3a1.500 1.500 0 0 1 1.500 1.500v3" fill="none" stroke="#aaa" stroke-width="1.2"/>
<rect x="1684" y="467" width="19" height="19" rx="3" fill="#383838"/><rect x="1690" y="473" width="7" height="7" fill="#8a8a8a" stroke="#bbb"/>
<text x="1709.5" y="482" class="serif" style="font-size:14px;font-weight:normal;fill:#b0b0b0">T</text>
<text x="1761" y="481">Tint:</text>
<rect x="1787" y="466" width="53" height="21" rx="2" fill="#5e5e5e"/><text x="1791" y="480" style="fill:#9c9c9c">100</text><path d="M1829 473l3.500 3.500-3.500 3.500" fill="none" stroke="#8a8a8a"/>
<text x="1842" y="481" class="b">%</text>
<rect x="1640" y="496" width="238" height="176" fill="#515151"/>
<g fill="#474747"><rect x="1640" y="496" width="226" height="1"/><rect x="1640" y="517" width="226" height="1"/><rect x="1640" y="539" width="226" height="1"/><rect x="1640" y="561" width="226" height="1"/><rect x="1640" y="583" width="226" height="1"/><rect x="1640" y="605" width="226" height="1"/><rect x="1640" y="627" width="226" height="1"/><rect x="1640" y="649" width="226" height="1"/><rect x="1640" y="671" width="239" height="1"/></g>
<rect x="1658.5" y="500.5" width="12" height="12" fill="#fff" stroke="#222"/><path d="M1659 512L1670 501" stroke="#e0141e" stroke-width="1.5"/>
<rect x="1658.5" y="522.5" width="12" height="12" fill="#000" stroke="#333"/>
<rect x="1658.5" y="544.5" width="12" height="12" fill="#fff" stroke="#333"/>
<rect x="1658.5" y="566.5" width="12" height="12" fill="#000" stroke="#333"/>
<rect x="1658.5" y="588.5" width="12" height="12" fill="#00aeef" stroke="#333"/>
<rect x="1658.5" y="610.5" width="12" height="12" fill="#ec008c" stroke="#333"/>
<rect x="1658.5" y="632.5" width="12" height="12" fill="#fff200" stroke="#333"/>
<rect x="1658.5" y="654.5" width="12" height="12" fill="#d2232a" stroke="#333"/>
<text x="1678" y="511">[None]</text><text x="1678" y="533">[Registration]</text><text x="1678" y="555">[Paper]</text><text x="1678" y="577">[Black]</text><text x="1678" y="599">C=100 M=0 Y=0 K=0</text><text x="1678" y="621">C=0 M=100 Y=0 K=0</text><text x="1678" y="643">C=0 M=0 Y=100 K=0</text><text x="1678" y="665">C=15 M=100 Y=100 K=0</text>
<use href="#pen" x="1813" y="506"/><use href="#pen" x="1813" y="528"/><use href="#pen" x="1813" y="572"/>
<rect x="1840.5" y="501.5" width="10" height="10" fill="#fff" stroke="#222"/><path d="M1841 511L1850 502" stroke="#e0141e"/>
<rect x="1840.5" y="523.5" width="10" height="10" fill="none" stroke="#a8a8a8"/><circle cx="1845.5" cy="528.5" r="3" fill="none" stroke="#a8a8a8"/><path d="M1845.5 524v9M1841 528.5h9" stroke="#a8a8a8" stroke-width=".7"/>
<use href="#proc" x="1829" y="572.5"/><use href="#proc" x="1829" y="594.5"/><use href="#proc" x="1829" y="616.5"/><use href="#proc" x="1829" y="638.5"/><use href="#proc" x="1829" y="660.5"/>
<use href="#cmyk" x="1845.5" y="572.5"/><use href="#cmyk" x="1845.5" y="594.5"/><use href="#cmyk" x="1845.5" y="616.5"/><use href="#cmyk" x="1845.5" y="638.5"/><use href="#cmyk" x="1845.5" y="660.5"/>
<path d="M1868 505l4.500-3.500 4.500 3.500M1868 663l4.500 3.500 4.500-3.500" fill="none" stroke="#7a7a7a"/>
<rect x="1867" y="508" width="10" height="122" rx="5" fill="#6a6a6a"/>
<rect x="1649" y="681" width="8" height="8" fill="none" stroke="#7a7a7a"/><path d="M1652 679h7v12h-4M1647 686h7l-2-2M1654 686l-2 2" fill="none" stroke="#7a7a7a"/>
<rect x="1759" y="681" width="9" height="9" fill="url(#chk)"/><rect x="1759" y="681" width="9" height="9" fill="none" stroke="#aaa"/><path d="M1771 692l1 1.500 1-1.500z" fill="#aaa"/>
<path d="M1787 682v9h12.500v-8h-7.500l-1.500-1.500z" fill="#a8a8a8"/>
<rect x="1817.5" y="681" width="10" height="10" fill="none" stroke="#b4b4b4" stroke-width="1.3"/><path d="M1822.5 683.5v5M1820 686h5" stroke="#b4b4b4"/>
<path d="M1845 682h8M1846 682v10h6v-10M1847.5 680h3M1848 684v6M1850 684v6" fill="none" stroke="#7a7a7a"/>
<rect x="1639" y="698" width="240" height="3" fill="#3a3a3a"/>

<!-- Layers -->
<rect x="1639" y="701" width="240" height="27" fill="#434343"/>
<rect x="1695" y="701" width="63" height="28" fill="#535353"/><path d="M1694.5 701v27M1758.5 701v27M1810.5 701v27" stroke="#3a3a3a"/>
<text x="1651" y="719" class="b" style="font-size:10.5px;fill:#8e8e8e">Pages</text>
<path d="M1703 713l3-3 3 3M1703 717l3 3 3-3" fill="none" stroke="#b0b0b0"/>
<text x="1713" y="719" class="b" style="font-size:10.5px;fill:#f0f0f0">Layers</text>
<text x="1770" y="719" class="b" style="font-size:10.5px;fill:#8e8e8e">Links</text>
<path d="M1863 712.5h10M1863 714.5h10M1863 716.5h10M1863 718.5h10" stroke="#b0b0b0" stroke-width=".9"/>
<rect x="1660" y="731" width="1" height="22" fill="#474747"/><rect x="1682" y="731" width="1" height="22" fill="#474747"/><rect x="1640" y="752" width="239" height="1" fill="#474747"/>
<path d="M1644 741.5c3-5 9-5 12 0-3 5-9 5-12 0z" fill="none" stroke="#b0b0b0"/><circle cx="1650" cy="741.5" r="2" fill="#b0b0b0"/>
<rect x="1684" y="731" width="3.5" height="21" fill="#4f8ff0"/>
<rect x="1688" y="731" width="190" height="21" fill="#4d6a8a"/>
<path d="M1698 737l3.500 4-3.500 4" fill="none" stroke="#9fb2c6"/>
<text x="1707" y="746" class="b" style="font-size:10.5px;fill:#f2f2f2">Layer 1</text>
<path d="M1840 747l1-3 6-6 3 3-6 6z" fill="#a0a6ad"/>
<rect x="1862.5" y="738.5" width="6" height="6" fill="none" stroke="#0a0f1f" stroke-width="1.2"/>
<rect x="1640" y="1015" width="239" height="1" fill="#474747"/>
<text x="1644" y="1031.5">Page: 1, 1 Layer</text>
<rect x="1817.5" y="1022.5" width="10" height="10" fill="none" stroke="#b4b4b4" stroke-width="1.3"/><path d="M1822.5 1025v5M1820 1027.5h5" stroke="#b4b4b4"/>
<path d="M1845 1023h9M1846 1023v10h7v-10M1847.5 1021h4M1848 1025v6M1850 1025v6M1852 1025v6" fill="none" stroke="#7a7a7a"/>

<!-- dock -->
<g fill="#3a3a3a"><rect x="1882" y="176" width="38" height="1"/><rect x="1882" y="273" width="38" height="1"/><rect x="1882" y="371" width="38" height="1"/><rect x="1882" y="439" width="38" height="1"/><rect x="1882" y="508" width="38" height="1"/><rect x="1882" y="549" width="38" height="1"/><rect x="1882" y="590" width="38" height="1"/><rect x="1882" y="659" width="38" height="1"/></g>
<use href="#grip" x="1892" y="111"/><use href="#grip" x="1892" y="180"/><use href="#grip" x="1892" y="277"/><use href="#grip" x="1892" y="375"/><use href="#grip" x="1892" y="443"/><use href="#grip" x="1892" y="512"/><use href="#grip" x="1892" y="553"/><use href="#grip" x="1892" y="594"/>
<path d="M1894 125h16M1894 131h16M1894 137h16" stroke="#a8a8a8"/><circle cx="1899" cy="125" r="2" fill="#535353" stroke="#a8a8a8"/><circle cx="1906" cy="131" r="2" fill="#535353" stroke="#a8a8a8"/><circle cx="1899" cy="137" r="2" fill="#535353" stroke="#a8a8a8"/>
<rect x="1893.5" y="153" width="12" height="14" fill="none" stroke="#a8a8a8" stroke-width="1.3"/><path d="M1896.5 153v-3h12v14h-3" fill="none" stroke="#a8a8a8" stroke-width="1.3"/><path d="M1901 150h5v8l-2.500-2-2.500 2z" fill="#a8a8a8"/>
<path d="M1894 196h16M1894 199h5M1905 199h5M1894 202h4M1906 202h4M1894 205h5M1905 205h5M1894 208h16" stroke="#a8a8a8"/><ellipse cx="1902" cy="201.5" rx="4.5" ry="5" fill="#bdbdbd"/>
<rect x="1893" y="222" width="17" height="2" fill="#b4b4b4"/><rect x="1893" y="227" width="17" height="2" fill="#b4b4b4"/><rect x="1893" y="233" width="17" height="2" fill="#b4b4b4"/>
<path d="M1892 258c0-6 7-9 12-8s8 5 8 8c0 3-3 1-5 2s0 4-3 5-12 1-12-7z" fill="#a8a8a8"/><circle cx="1897" cy="258" r="1.3" fill="#535353"/><circle cx="1902" cy="254" r="1.3" fill="#535353"/><circle cx="1907" cy="254" r="1.3" fill="#535353"/>
<rect x="1893.5" y="298" width="6" height="6" fill="none" stroke="#a8a8a8"/><rect x="1896.5" y="301" width="6" height="6" fill="none" stroke="#a8a8a8"/><path d="M1904 290h5v14M1906.5 290v14M1904 290a3 3 0 0 0 0 6h2" fill="none" stroke="#a8a8a8" stroke-width="1.3"/>
<rect x="1893.5" y="324" width="6" height="6" fill="none" stroke="#a8a8a8"/><rect x="1896.5" y="327" width="6" height="6" fill="none" stroke="#a8a8a8"/><text x="1902" y="329" style="font-size:14px;fill:#a8a8a8">A</text>
<rect x="1897.5" y="346" width="13" height="12" fill="none" stroke="#a8a8a8" stroke-dasharray="3 1.500"/><rect x="1893.5" y="354" width="6" height="6" fill="none" stroke="#a8a8a8"/><rect x="1896.5" y="357" width="6" height="6" fill="none" stroke="#a8a8a8"/>
<path d="M1894.5 385v19" stroke="#a8a8a8" stroke-width="1.3"/><rect x="1897" y="388" width="7" height="6" fill="#b4b4b4"/><rect x="1897" y="396" width="13" height="6" fill="#b4b4b4"/>
<rect x="1894" y="416" width="9" height="9" fill="#a8a8a8"/><rect x="1899" y="421" width="9" height="9" fill="#777"/>
<path d="M1891 460h8v-4l6 6-6 6v-4h-8zM1900 454l6 5-3 2z" fill="#b4b4b4"/><circle cx="1907" cy="468" r="4" fill="none" stroke="#b4b4b4" stroke-width="2"/>
<text x="1895.5" y="500" class="serif" style="font-size:23px;fill:#b8b8b8">S</text>
<path d="M1894 527h15v16h-15z" fill="#b4b4b4"/><path d="M1897 530h5M1899.5 530v4M1897 536h9M1897 539h9" stroke="#535353"/>
<path d="M1897 565h9v17l-4.500-4-4.500 4z" fill="#b4b4b4"/>
<text x="1892" y="612" style="font-size:11px;fill:#b0b0b0">abc</text><path d="M1891 615h19" stroke="#a8a8a8"/><path d="M1901 611l7 7-4 0-3 5z" fill="#a8a8a8"/>
<circle cx="1899" cy="640" r="7" fill="#a8a8a8"/><path d="M1893 639h12M1899 633v14" stroke="#535353"/><path d="M1903 640l4-1 1 3 3 0 1 5-3 3h-4l-3-5z" fill="#b8b8b8" stroke="#535353"/>

<!-- floating gradient panel -->
<rect x="1516" y="186" width="47" height="50" fill="#000" opacity=".18" filter="url(#bl2)"/>
<path d="M1520 237V186a4 4 0 0 1 4-4h31a4 4 0 0 1 4 4v51z" fill="#535353"/>
<path d="M1520 195V186a4 4 0 0 1 4-4h31a4 4 0 0 1 4 4v9z" fill="#434343"/>
<rect x="1520" y="236" width="39" height="1.5" fill="#3a3a3a"/>
<path d="M1529 187l3 2.500-3 2.500zM1533 187l3 2.500-3 2.500z" fill="#b8b8b8"/>
<path d="M1548 186.5l5.500 5M1553.5 186.5l-5.500 5" stroke="#b8b8b8" stroke-width="1.8"/>
<g transform="translate(1530,200)"><path d="M0 0v4M2 0v4M4 0v4M6 0v4M8 0v4M10 0v4M12 0v4M14 0v4M16 0v4M18 0v4" stroke="#2f2f2f"/></g>
<rect x="1532.5" y="213.5" width="16.5" height="11.5" fill="url(#gr)" stroke="#c8c8c8"/>

<!-- dialog -->
<rect x="584" y="163" width="752" height="714" fill="#000" opacity=".42" filter="url(#bl)"/>
<rect x="586" y="160" width="748" height="713" fill="#535353"/>
<rect x="587" y="161" width="746" height="30" fill="#fff"/>
<rect x="586.5" y="160.5" width="747" height="712.5" fill="none" stroke="#7c7c7c"/>
<text x="595" y="180" textLength="61" style="font-size:11.5px;fill:#111">Preferences</text>
<rect x="602.5" y="206.5" width="157.5" height="601" fill="#535353" stroke="#4a95e0"/>
<rect x="603" y="272" width="157" height="22" fill="#4d6a8a"/>
<g class="side"><text x="607" y="220.5" textLength="34">General</text><text x="607" y="242.5" textLength="40.3">Interface</text><text x="607" y="264.5" textLength="98.7">User Interface Scaling</text><text x="607" y="286.5" textLength="22">Type</text><text x="607" y="308.5" textLength="69.3">Advanced Type</text><text x="607" y="330.5" textLength="52.7">Composition</text><text x="607" y="352.5" textLength="86.7">Units &amp; Increments</text><text x="607" y="374.5" textLength="23.7">Grids</text><text x="607" y="396.5" textLength="93.7">Guides &amp; Pasteboard</text><text x="607" y="418.5" textLength="44">Dictionary</text><text x="607" y="440.5" textLength="34.3">Spelling</text><text x="607" y="462.5" textLength="52.6">Autocorrect</text><text x="607" y="484.5" textLength="26">Notes</text><text x="607" y="506.5" textLength="67">Track Changes</text><text x="607" y="528.5" textLength="88">Story Editor Display</text><text x="607" y="550.5" textLength="92">Display Performance</text><text x="607" y="572.5" textLength="92">Appearance of Black</text><text x="607" y="594.5" textLength="57.5">File Handling</text><text x="607" y="616.5" textLength="86">Clipboard Handling</text><text x="607" y="638.5" textLength="56">Right-to-Left</text></g>
<g fill="none" stroke="#484848">
<path d="M776 227.5H1313"/>
<path d="M786 245.5H776.5V557.5H1312.5V245.5H870"/>
<path d="M786 584.5H776.5V655.5H1312.5V584.5H930"/>
<path d="M786 682.5H776.5V805.5H1312.5V682.5H918"/>
</g>
<g class="dl">
<text x="776" y="221.5" style="font-size:12.5px">Type</text>
<text x="790" y="249" textLength="73.7">Type Options</text>
<use href="#ck" x="786" y="264"/><text x="805" y="268.5" textLength="147.7">Use Typographer’s Quotes</text>
<use href="#ck" x="786" y="290"/><text x="805" y="294.5" textLength="238.7">Type Tool Converts Frames to Text Frames</text>
<use href="#ck" x="786" y="316"/><text x="805" y="320.5" textLength="256.7">Map Optical Size to Font Size in Variable Fonts</text>
<use href="#ck" x="786" y="342"/><text x="805" y="346.5" textLength="149.7">Triple Click to Select a Line</text>
<use href="#un" x="786" y="368"/><text x="805" y="372.5" textLength="194.7">Apply Leading to Entire Paragraphs</text>
<use href="#ck" x="786" y="394"/><text x="805" y="398.5" textLength="349">Adjust Spacing Automatically When Cutting and Pasting Words</text>
<use href="#ck" x="786" y="420"/><text x="805" y="424.5" textLength="166.7">Enable in-menu font previews</text>
<text x="805" y="451.5" textLength="197">Number of Recent Fonts to Display:</text>
<rect x="1008.5" y="436.5" width="55" height="20" rx="3" fill="#464646" stroke="#6d6d6d"/><text x="1013" y="451">10</text>
<use href="#un" x="786" y="477.5"/><text x="805" y="482" textLength="247">Enable Japanese Font Preview in ‘Find More’</text>
<use href="#un" x="786" y="506"/><text x="805" y="510.5" textLength="202">Sort Recent Fonts List Alphabetically</text>
<use href="#ck" x="786" y="532.5"/><text x="805" y="537" textLength="126">Preview Font on Hover</text>
<text x="790" y="589" textLength="152">Drag and Drop Text Editing</text>
<use href="#un" x="786" y="604"/><text x="805" y="608.5" textLength="124">Enable in Layout View</text>
<use href="#ck" x="786" y="630.5"/><text x="805" y="635" textLength="121">Enable in Story Editor</text>
<rect x="786" y="676" width="132" height="12" fill="#535353"/>
<use href="#ck" x="790" y="681"/><text x="811" y="685.500" textLength="100">Smart Text Reflow</text>
<text x="786" y="707.5" textLength="82">Add Pages To:</text>
<rect x="874.5" y="692.5" width="146" height="20" rx="3" fill="#494949" stroke="#6d6d6d"/><text x="878" y="707.5">End of Story</text><use href="#cd" x="1011.5" y="702.5"/>
<use href="#ck" x="786" y="728"/><text x="805" y="732.5" textLength="162">Limit to Primary Text Frames</text>
<use href="#un" x="786" y="754"/><text x="805" y="758.5" textLength="169">Preserve Facing-Page Spreads</text>
<use href="#un" x="786" y="780"/><text x="805" y="784.5" textLength="114">Delete Empty Pages</text>
<rect x="1114" y="827" width="88" height="25" rx="12.5" fill="#535353" stroke="#fff" stroke-width="2"/>
<text x="1157.5" y="843.5" text-anchor="middle" style="fill:#fff">OK</text>
<rect x="1213.5" y="826.5" width="89.5" height="25.5" rx="12.7" fill="#535353" stroke="#c4c4c4"/>
<text x="1257.7" y="843.5" text-anchor="middle" style="fill:#fff">Cancel</text>
</g>

<!-- green arrow -->
<g fill="none" stroke="#1fde0c" stroke-linecap="round" stroke-linejoin="round">
<path d="M691.5 168.5C698 177 708 188 713 197C718 206 726 214 735 222C746 231 756 238 763.5 247" stroke-width="4.5"/>
<path d="M764 235.5C770 240 776 245 778.5 251C779 256 774 258 769 258C765 258 761 256 757.5 254.5" stroke-width="4.5"/>
</g>
</svg>
</body></html>
